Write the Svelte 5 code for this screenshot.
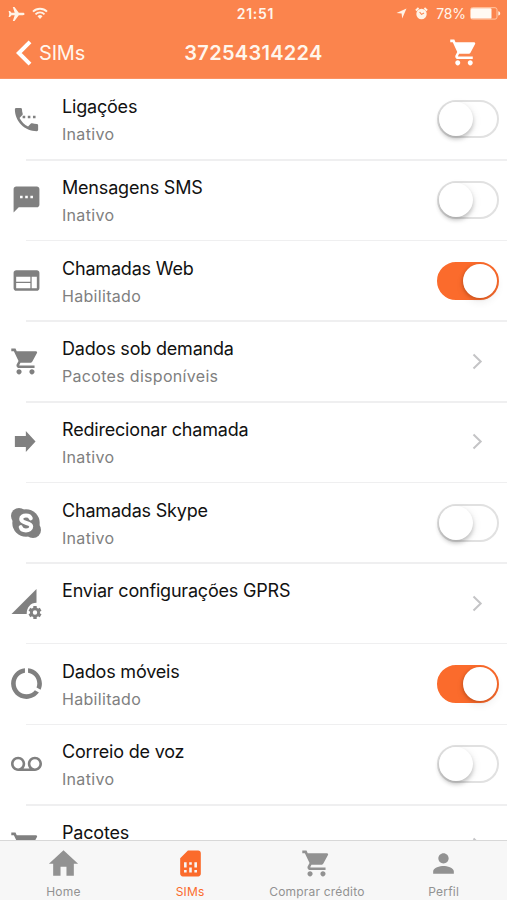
<script>
  const cart = 'M7 18c-1.1 0-1.99.9-1.99 2S5.9 22 7 22s2-.9 2-2-.9-2-2-2zM1 2v2h2l3.6 7.59-1.35 2.45c-.16.28-.25.61-.25.96 0 1.1.9 2 2 2h12v-2H7.42c-.14 0-.25-.11-.25-.25l.03-.12.9-1.63h7.45c.75 0 1.41-.41 1.75-1.03l3.58-6.49c.08-.14.12-.31.12-.48 0-.55-.45-1-1-1H5.21l-.94-2H1zm16 16c-1.1 0-1.99.9-1.99 2s.89 2 1.99 2 2-.9 2-2-.9-2-2-2z';
  const icons = {
    phone: 'M11 9H9v2h2V9zm4 0h-2v2h2V9zm5 6.5c-1.25 0-2.45-.2-3.57-.57-.35-.11-.74-.03-1.02.24l-2.2 2.2c-2.83-1.44-5.15-3.75-6.59-6.58l2.2-2.21c.28-.27.36-.66.25-1.01C8.7 6.45 8.5 5.25 8.5 4c0-.55-.45-1-1-1H4c-.55 0-1 .45-1 1 0 9.39 7.61 17 17 17 .55 0 1-.45 1-1v-3.500c0-.55-.45-1-1-1zM17 9v2h2V9h-2z',
    sms: 'M20 2H4c-1.1 0-1.99.9-1.99 2L2 22l4-4h14c1.1 0 2-.9 2-2V4c0-1.1-.9-2-2-2zM9 11H7V9h2v2zm4 0h-2V9h2v2zm4 0h-2V9h2v2z',
    web: 'M20 4H4c-1.100 0-1.990.9-1.990 2L2 18c0 1.100.9 2 2 2h16c1.100 0 2-.9 2-2V6c0-1.100-.9-2-2-2zm-5 14H4v-4h11v4zm0-5H4V9h11v4zm5 5h-4V9h4v9z',
    cart,
    arrow: 'M3 7.800h8.500V3.800l7.500 8.200-7.500 8.200v-4H3z',
    ring: 'M13 2.050v3.030c3.390.490 6 3.390 6 6.920 0 .9-.18 1.750-.480 2.540l2.600 1.530c.560-1.240.880-2.620.880-4.070 0-5.180-3.950-9.450-9-9.950zM12 19c-3.870 0-7-3.130-7-7 0-3.530 2.610-6.430 6-6.920V2.050c-5.060.5-9 4.760-9 9.950 0 5.520 4.470 10 9.990 10 3.310 0 6.240-1.610 8.060-4.090l-2.600-1.530C16.170 17.980 14.210 19 12 19z',
    voice: 'M18.500 6C15.460 6 13 8.460 13 11.500c0 1.330.470 2.550 1.260 3.500H9.740c.790-.950 1.260-2.170 1.260-3.500C11 8.460 8.540 6 5.500 6S0 8.460 0 11.500 2.460 17 5.500 17h13c3.040 0 5.500-2.460 5.500-5.500S21.540 6 18.500 6zm-13 9C3.570 15 2 13.430 2 11.500S3.570 8 5.500 8 9 9.570 9 11.500 7.430 15 5.500 15zm13 0c-1.930 0-3.500-1.570-3.500-3.500S16.570 8 18.500 8 22 9.570 22 11.500 20.430 15 18.500 15z',
    home: 'M9.700 21.500v-7h4.600v7h5.700v-9.300H23.300L12 1.700.7 12.200H4v9.300z',
    sim: 'M19.990 4c0-1.100-.890-2-1.990-2h-8L4 8v12c0 1.100.9 2 2 2h12.010c1.100 0 1.990-.9 1.990-2l-.01-16zM9 19H7v-2h2v2zm8 0h-2v-2h2v2zm-8-4H7v-4h2v4zm4 4h-2v-4h2v4zm0-6h-2v-2h2v2zm4 2h-2v-4h2v4z',
    person: 'M12 12c2.210 0 4-1.790 4-4s-1.790-4-4-4-4 1.790-4 4 1.790 4 4 4zm0 2c-2.670 0-8 1.340-8 4v2h16v-2c0-2.660-5.330-4-8-4z'
  };
  const rows = [
    { icon: 'phone', title: 'Ligações', sub: 'Inativo', on: false },
    { icon: 'sms', title: 'Mensagens SMS', sub: 'Inativo', on: false },
    { icon: 'web', title: 'Chamadas Web', sub: 'Habilitado', on: true },
    { icon: 'cart', title: 'Dados sob demanda', sub: 'Pacotes disponíveis' },
    { icon: 'arrow', title: 'Redirecionar chamada', sub: 'Inativo' },
    { icon: 'skype', title: 'Chamadas Skype', sub: 'Inativo', on: false },
    { icon: 'gprs', title: 'Enviar configurações GPRS', sub: '' },
    { icon: 'ring', title: 'Dados móveis', sub: 'Habilitado', on: true },
    { icon: 'voice', title: 'Correio de voz', sub: 'Inativo', on: false },
    { icon: 'cart', title: 'Pacotes', sub: '' }
  ];
  const tabs = [
    { icon: 'home', label: 'Home' },
    { icon: 'sim', label: 'SIMs', active: true },
    { icon: 'cart', label: 'Comprar crédito' },
    { icon: 'person', label: 'Perfil' }
  ];
</script>

<div class="screen">
  <header>
    <div class="status">
      <div class="left">
        <svg width="17" height="16" viewBox="0 0 17 16"><path d="M16.500 8c0-.8-.7-1.200-1.500-1.200H10.800L6.500.9H4.800L6.700 6.800H3.500L2 5H.6L1.300 8l-.7 3H2l1.500-1.800h3.200l-1.900 5.900h1.700l4.300-5.900H15c.8 0 1.500-.4 1.500-1.200z" fill="#fff3e6" /></svg>
        <svg width="16" height="13" viewBox="0 0 16 13" fill="none" stroke="#fff3e6" stroke-width="1.900"><path d="M1 4.700a9.800 9.800 0 0 1 14 0M3.500 7.300a6.300 6.300 0 0 1 9 0" /><path d="M5.500 9.200a3.500 3.500 0 0 1 5 0L8 11.900z" fill="#fff3e6" stroke="none" /></svg>
      </div>
      <span class="time">21:51</span>
      <div class="right">
        <svg width="11" height="11" viewBox="0 0 11 11"><path d="M10.500.5 6.200 10.500 5.600 5.500.5 4.900z" fill="#fff3e6" /></svg>
        <svg width="13" height="13" viewBox="0 0 13 13"><circle cx="6.500" cy="7" r="5.200" fill="#fff3e6" /><path d="M.9 3.500 3.600 1M12.100 3.500 9.400 1" stroke="#fff3e6" stroke-width="1.900" /><path d="M4.600 5 6.500 7.400 9 6" fill="none" stroke="#fb844d" stroke-width="1.100" /></svg>
        <span class="pct">78%</span>
        <svg width="31" height="13" viewBox="0 0 31 13"><rect x=".5" y=".7" width="26.500" height="11.400" rx="2" fill="none" stroke="#ffc9a7" /><rect x="1" y="1.200" width="20.500" height="10.400" rx="1.200" fill="#fffaf3" /><path d="M28.300 4.200c1.400.3 1.900 1.300 1.900 2.200s-.5 1.900-1.900 2.200z" fill="#fff3e6" /></svg>
      </div>
    </div>
    <nav>
      <div class="back">
        <svg width="17" height="26" viewBox="0 0 17 26"><path d="M14 1.800 2.800 13 14 24.200" fill="none" stroke="#fff" stroke-width="4" /></svg>
        <span>SIMs</span>
      </div>
      <h1>37254314224</h1>
      <svg class="buy" width="30" height="31" viewBox="0 0 24 24" preserveAspectRatio="none"><path d={cart} fill="#fff" /></svg>
    </nav>
  </header>

  <main>
    {#each rows as row}
      <div class="row">
        <div class="icon">
          {#if row.icon === 'skype'}
            <svg width="32" height="32" viewBox="0 0 32 32" fill="#808080"><circle cx="9" cy="9" r="8" /><circle cx="23" cy="23" r="8" /><circle cx="16" cy="16" r="13.700" /><path d="M20.800 11.400C20.200 9.400 18.500 8.600 16 8.600c-2.800 0-4.800 1.200-4.800 3.500 0 5.200 10 2.600 10 7.400 0 2.500-2.300 3.900-5.300 3.900-2.800 0-4.700-1.200-5.200-3.300" fill="none" stroke="#fff" stroke-width="4" stroke-linecap="round" /></svg>
          {:else if row.icon === 'gprs'}
            <svg width="32" height="32" viewBox="0 0 32 32" fill="#808080"><path d="M1.500 27 26.500 2v13.700c-6 0-9.800 4.600-9.800 11.300z" /><g transform="translate(25 25.500)"><circle r="3.600" fill="none" stroke="#808080" stroke-width="2.800" />{#each [0, 60, 120, 180, 240, 300] as a}<rect x="-1.700" y="-6.500" width="3.400" height="3" transform="rotate({a})" />{/each}</g></svg>
          {:else}
            <svg class={row.icon} width="31" height="31" viewBox="0 0 24 24" fill="#808080"><path d={icons[row.icon]} /></svg>
          {/if}
        </div>
        <div class="body">
          <div class="text">
            <div class="title">{row.title}</div>
            <div class="sub">{row.sub}</div>
          </div>
          {#if row.on === undefined}
            <svg class="chev" width="11" height="17" viewBox="0 0 11 17"><path d="M1.500 1.500 8.700 8.500 1.500 15.500" fill="none" stroke="#c4c4c6" stroke-width="2" /></svg>
          {:else}
            <div class="switch" class:on={row.on}><i></i></div>
          {/if}
        </div>
      </div>
    {/each}
  </main>

  <footer>
    {#each tabs as tab}
      <div class="tab" class:active={tab.active}>
        <svg width="31" height="31" viewBox="0 0 24 24" fill="currentColor"><path d={icons[tab.icon]} /></svg>
        <span>{tab.label}</span>
      </div>
    {/each}
  </footer>
</div>

<style>
  :global(body) { margin: 0; background: #fff; }
  .screen { width: 507px; height: 900px; overflow: hidden; display: flex; flex-direction: column; font-family: Inter, 'Liberation Sans', sans-serif; background: #fff; }
  svg { display: block; flex: none; }
  header { height: 79px; flex: none; background: #fb844d; color: #fff6ec; box-sizing: border-box; border-bottom: 1px solid #fb9262; }
  .status { height: 27px; display: grid; grid-template-columns: 1fr auto 1fr; align-items: center; padding: 0 6px 0 8px; font-size: 14px; }
  .left, .right { display: flex; align-items: center; }
  .left { gap: 7px; }
  .right { justify-content: flex-end; gap: 8px; }
  .time { font-weight: 600; letter-spacing: .7px; margin-left: 2px; }
  .pct { margin-right: -4px; letter-spacing: -.1px; }
  nav { height: 51px; display: grid; grid-template-columns: 1fr auto 1fr; align-items: center; padding: 0 28px 0 16px; }
  .back { display: flex; align-items: center; gap: 6px; font-size: 20px; letter-spacing: -.2px; }
  h1 { margin: 0; font-size: 20px; font-weight: 600; letter-spacing: .3px; transform: translateX(6px); }
  .buy { justify-self: end; }
  main { flex: 1; min-height: 0; overflow: hidden; }
  .row { height: 80.65px; display: flex; padding-left: 10px; }
  .icon { width: 32px; display: flex; align-items: center; justify-content: center; }
  .icon .cart { margin-right: 1px; }
  .icon .arrow { margin-left: 1px; }
  .icon .ring { width: 37px; height: 37px; }
  .body { position: relative; flex: 1; display: flex; justify-content: space-between; align-items: center; padding: 0 8px 0 20px; }
  .body::after { content: ''; position: absolute; left: -16px; right: 0; bottom: -1px; height: 1.500px; background: #efeff0; }
  .text { align-self: flex-start; padding-top: 16.300px; white-space: nowrap; }
  .title { font-size: 18px; line-height: 24px; color: #111; letter-spacing: -.19px; }
  .sub { font-size: 16px; line-height: 22px; margin-top: 4px; color: #808080; letter-spacing: .31px; }
  .chev { margin-right: 16px; }
  .switch { width: 62px; height: 38px; box-sizing: border-box; border-radius: 19px; border: 2px solid #e1e1e1; display: flex; }
  .switch i { width: 34px; height: 34px; border-radius: 50%; background: #fff; box-shadow: 0 3px 4px rgba(0, 0, 0, .22), 2px 2px 9px rgba(0, 0, 0, .06); }
  .switch.on { background: #fb6b2c; border-color: #fb6b2c; justify-content: flex-end; }
  .switch.on i { box-shadow: -1px 1px 3px rgba(110, 40, 0, .3), 0 4px 8px rgba(0, 0, 0, .07); }
  footer { height: 60px; flex: none; box-sizing: border-box; border-top: 1px solid #d8d8d8; background: #f7f7f7; display: flex; }
  .tab { flex: 1; display: flex; flex-direction: column; align-items: center; padding-top: 7px; color: #929292; font-size: 12px; }
  .tab span { line-height: 16px; margin-top: 5px; letter-spacing: .2px; }
  .tab.active { color: #fb6b2c; }
</style>
